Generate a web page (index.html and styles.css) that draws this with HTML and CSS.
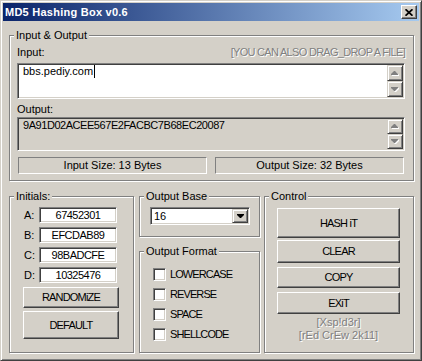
FILE: index.html
```html
<!DOCTYPE html>
<html lang="en">

<head>
    <meta charset="UTF-8">
    <meta name="viewport" content="width=device-width, initial-scale=1.0">
    <title>MD5 Hashing Box v0.6</title>
    <link rel="stylesheet" href="styles.css">
</head>

<body>
    <div class="window">
        <div class="titlebar">
            <span class="title">MD5 Hashing Box v0.6</span>
            <button class="close-btn">
                <svg width="8" height="7" viewBox="0 0 8 7"><path d="M0.5 0.3L7.5 6.7M7.5 0.3L0.5 6.7" stroke="#000" stroke-width="1.8" fill="none"/></svg>
            </button>
        </div>

        <div class="client">
            <div class="group group-io">
                <span class="group-title">Input &amp; Output</span>
                <div class="label-row">
                    <span>Input:</span>
                    <span class="hint">[YOU CAN ALSO DRAG_DROP A FILE]</span>
                </div>
                <div class="edit edit-input">
                    <div class="edit-text">bbs.pediy.com<span class="caret"></span></div>
                    <div class="scroll">
                        <span class="scroll-btn"><svg width="8" height="5" viewBox="0 0 8 5"><path d="M4 1h1l3 3v1H1V4z" fill="#fff"/><path d="M3 0h1l3 3v1H0V3z" fill="#808080"/></svg></span>
                        <span class="scroll-btn"><svg width="8" height="5" viewBox="0 0 8 5"><path d="M1 1h7v1L5 5H4L1 2z" fill="#fff"/><path d="M0 0h7v1L4 4H3L0 1z" fill="#808080"/></svg></span>
                    </div>
                </div>
                <div class="label-row label-output">Output:</div>
                <div class="edit edit-output">
                    <div class="edit-text hash">9A91D02ACEE567E2FACBC7B68EC20087</div>
                    <div class="scroll">
                        <span class="scroll-btn"><svg width="8" height="5" viewBox="0 0 8 5"><path d="M4 1h1l3 3v1H1V4z" fill="#fff"/><path d="M3 0h1l3 3v1H0V3z" fill="#808080"/></svg></span>
                        <span class="scroll-btn"><svg width="8" height="5" viewBox="0 0 8 5"><path d="M1 1h7v1L5 5H4L1 2z" fill="#fff"/><path d="M0 0h7v1L4 4H3L0 1z" fill="#808080"/></svg></span>
                    </div>
                </div>
                <div class="size-row">
                    <div class="size-box">Input Size: 13 Bytes</div>
                    <div class="size-box">Output Size: 32 Bytes</div>
                </div>
            </div>

            <div class="lower">
                <div class="group group-initials">
                    <span class="group-title">Initials:</span>
                    <div class="init-row"><span class="init-label">A:</span><span class="init-value">67452301</span></div>
                    <div class="init-row"><span class="init-label">B:</span><span class="init-value">EFCDAB89</span></div>
                    <div class="init-row"><span class="init-label">C:</span><span class="init-value">98BADCFE</span></div>
                    <div class="init-row"><span class="init-label">D:</span><span class="init-value">10325476</span></div>
                    <button class="btn init-btn btn-randomize">RANDOMiZE</button>
                    <button class="btn init-btn btn-default">DEFAULT</button>
                </div>

                <div class="middle">
                    <div class="group group-base">
                        <span class="group-title">Output Base</span>
                        <div class="select">
                            <span class="select-text">16</span>
                            <span class="select-btn"><svg width="7" height="4" viewBox="0 0 7 4"><path d="M0 0h7v1L4 4H3L0 1z" fill="#000"/></svg></span>
                        </div>
                    </div>
                    <div class="group group-format">
                        <span class="group-title">Output Format</span>
                        <div class="check-row"><span class="check-box"></span><span class="check-label">LOWERCASE</span></div>
                        <div class="check-row"><span class="check-box"></span><span class="check-label">REVERSE</span></div>
                        <div class="check-row"><span class="check-box"></span><span class="check-label">SPACE</span></div>
                        <div class="check-row"><span class="check-box"></span><span class="check-label">SHELLCODE</span></div>
                    </div>
                </div>

                <div class="group group-control">
                    <span class="group-title">Control</span>
                    <button class="btn ctrl-btn btn-hash">HASH iT</button>
                    <button class="btn ctrl-btn btn-clear">CLEAR</button>
                    <button class="btn ctrl-btn btn-copy">COPY</button>
                    <button class="btn ctrl-btn btn-exit">EXiT</button>
                    <div class="credits">[Xsp!d3r]<br>[rEd CrEw 2k11]</div>
                </div>
            </div>
        </div>
    </div>
</body>

</html>
```
FILE: styles.css
```css
* {
    margin: 0;
    padding: 0;
    box-sizing: border-box;
}

html,
body {
    width: 422px;
    height: 361px;
    overflow: hidden;
}

body {
    font-family: "Liberation Sans", Arial, sans-serif;
    font-size: 11px;
    line-height: 13px;
    color: #000;
    background-color: #d4d0c8;
}

/* window frame */
.window {
    width: 422px;
    height: 361px;
    padding: 2px;
    border: 1px solid;
    border-color: #d4d0c8 #404040 #404040 #d4d0c8;
    box-shadow: inset 1px 1px #fff, inset -1px -1px #808080;
}

.titlebar {
    height: 18px;
    display: flex;
    justify-content: space-between;
    align-items: center;
    padding: 0 2px;
    background: linear-gradient(to right, #0a246a, #a6caf0);
}

.title {
    color: #fff;
    font-weight: bold;
    letter-spacing: 0.25px;
}

.close-btn {
    width: 16px;
    height: 14px;
    display: flex;
    justify-content: center;
    align-items: center;
    background-color: #d4d0c8;
    border: 1px solid;
    border-color: #fff #404040 #404040 #fff;
    box-shadow: inset -1px -1px #808080;
}

.client {
    padding: 14px 0 0 6px;
}

/* group boxes */
.group {
    position: relative;
    border: 1px solid #808080;
    box-shadow: inset 1px 1px #fff, 1px 1px #fff;
}

.group-title {
    position: absolute;
    top: -7px;
    left: 4px;
    padding: 0 2px;
    background-color: #d4d0c8;
    white-space: nowrap;
}

.group-io {
    width: 405px;
    height: 146px;
    padding: 10px 8px 0 7px;
}

.label-row {
    display: flex;
    justify-content: space-between;
    height: 13px;
}

.label-output {
    margin-top: 4px;
}

.hint {
    color: #808080;
    text-shadow: 1px 1px #fff;
    letter-spacing: -0.7px;
}

.edit {
    display: flex;
    padding: 1px;
    background-color: #fff;
    border: 1px solid;
    border-color: #808080 #fff #fff #808080;
    box-shadow: inset 1px 1px #404040, inset -1px -1px #d4d0c8;
}

.edit-input {
    height: 36px;
    margin-top: 4px;
}

.edit-output {
    height: 34px;
    margin-top: 1px;
    background-color: #d4d0c8;
}

.edit-text {
    flex: 1;
    padding: 0 4px;
    white-space: nowrap;
    overflow: hidden;
}

.hash {
    letter-spacing: -0.45px;
}

.caret {
    display: inline-block;
    width: 1px;
    height: 13px;
    margin-left: 1px;
    vertical-align: -3px;
    background-color: #000;
}

.scroll {
    width: 16px;
    display: flex;
    flex-direction: column;
}

.scroll-btn {
    flex: 1;
    display: flex;
    justify-content: center;
    align-items: center;
    background-color: #d4d0c8;
    border: 1px solid;
    border-color: #d4d0c8 #404040 #404040 #d4d0c8;
    box-shadow: inset 1px 1px #fff, inset -1px -1px #808080;
}

.size-row {
    display: flex;
    gap: 8px;
    margin-top: 6px;
    padding: 0 1px;
}

.size-box {
    flex: 1;
    height: 17px;
    line-height: 15px;
    text-align: center;
    border: 1px solid;
    border-color: #808080 #fff #fff #808080;
}

/* lower part */
.lower {
    display: flex;
    height: 157px;
    margin-top: 15px;
}

.group-initials {
    width: 125px;
    padding: 10px 0 0 13px;
}

.init-row {
    display: flex;
    align-items: center;
    height: 16px;
    margin-bottom: 4px;
}

.init-label {
    width: 16px;
    padding-left: 1px;
}

.init-value {
    width: 78px;
    height: 16px;
    padding-top: 1px;
    text-align: center;
    letter-spacing: -0.5px;
    background-color: #fff;
    border: 1px solid;
    border-color: #808080 #fff #fff #808080;
    box-shadow: inset 1px 1px #404040, inset -1px -1px #d4d0c8;
}

.btn {
    display: flex;
    justify-content: center;
    align-items: center;
    font: inherit;
    color: #000;
    letter-spacing: -0.8px;
    background-color: #d4d0c8;
    border: 1px solid;
    border-color: #fff #404040 #404040 #fff;
    box-shadow: inset -1px -1px #808080;
}

.init-btn {
    width: 96px;
}

.btn-randomize {
    height: 21px;
}

.btn-default {
    height: 28px;
    margin-top: 3px;
}

.middle {
    width: 121px;
    margin-left: 5px;
    display: flex;
    flex-direction: column;
}

.group-base {
    height: 41px;
    padding: 10px 0 0 10px;
}

.select {
    width: 100px;
    height: 18px;
    display: flex;
    padding: 1px;
    background-color: #fff;
    border: 1px solid;
    border-color: #808080 #fff #fff #808080;
    box-shadow: inset 1px 1px #404040, inset -1px -1px #d4d0c8;
}

.select-text {
    flex: 1;
    padding-left: 2px;
    line-height: 14px;
}

.select-btn {
    width: 16px;
    display: flex;
    justify-content: center;
    align-items: center;
    background-color: #d4d0c8;
    border: 1px solid;
    border-color: #d4d0c8 #404040 #404040 #d4d0c8;
    box-shadow: inset 1px 1px #fff, inset -1px -1px #808080;
}

.group-format {
    flex: 1;
    margin-top: 14px;
    padding: 16px 0 0 13px;
}

.check-row {
    display: flex;
    align-items: center;
    height: 13px;
    margin-bottom: 7px;
}

.check-box {
    width: 13px;
    height: 13px;
    margin-right: 4px;
    background-color: #fff;
    border: 1px solid;
    border-color: #808080 #fff #fff #808080;
    box-shadow: inset 1px 1px #404040, inset -1px -1px #d4d0c8;
}

.check-label {
    letter-spacing: -0.9px;
}

.group-control {
    width: 150px;
    margin-left: 4px;
    padding: 11px 0 0 12px;
}

.ctrl-btn {
    width: 123px;
}

.btn-hash {
    height: 30px;
}

.btn-clear {
    height: 23px;
    margin-top: 2px;
}

.btn-copy {
    height: 21px;
    margin-top: 4px;
}

.btn-exit {
    height: 22px;
    margin-top: 4px;
}

.credits {
    width: 123px;
    margin-top: 2px;
    text-align: center;
    color: #808080;
    text-shadow: 1px 1px #fff;
}
```
